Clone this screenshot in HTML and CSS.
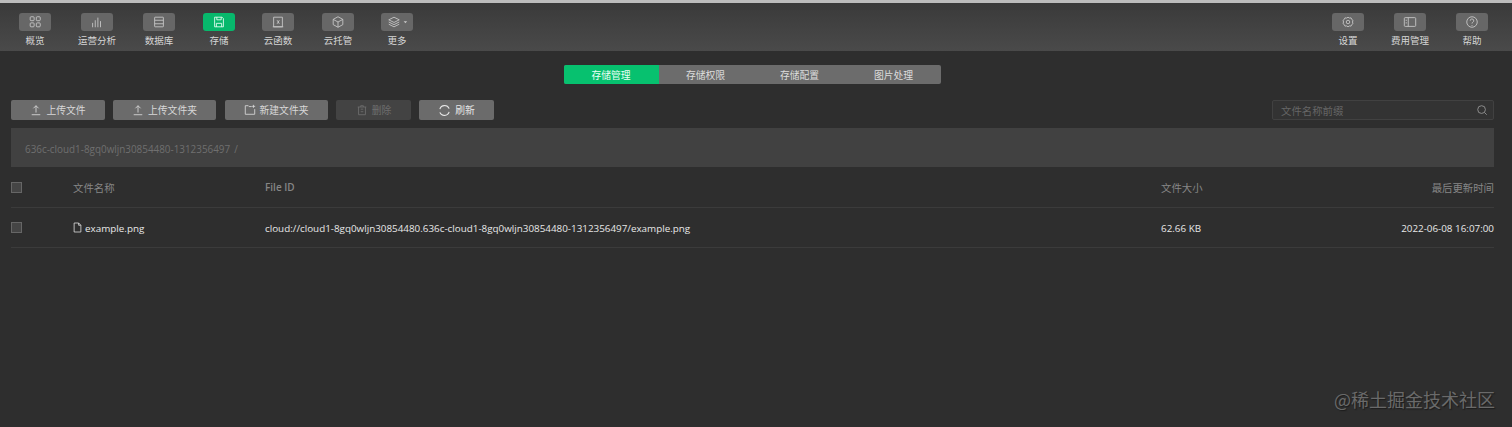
FILE: index.html
```html
<!DOCTYPE html>
<html lang="zh">
<head>
<meta charset="utf-8">
<title>存储</title>
<link rel="stylesheet" href="styles.css">
</head>
<body>
<header class="toolbar">
  <nav class="tool-group">
    <div class="tool w62"><span class="tool-btn"><svg viewBox="0 0 16 16" class="ic"><rect x="2.500" y="2" width="4.500" height="4.500" rx="1"/><rect x="9.500" y="2" width="4.500" height="4.500" rx="1"/><rect x="2.500" y="9" width="4.500" height="4.500" rx="1"/><rect x="9.500" y="9" width="4.500" height="4.500" rx="1"/></svg></span><span class="tool-label">概览</span></div>
    <div class="tool w62"><span class="tool-btn"><svg viewBox="0 0 16 16" class="ic"><path d="M3 9v5M6 6v8M9 3v11M12 7v7"/></svg></span><span class="tool-label">运营分析</span></div>
    <div class="tool w62"><span class="tool-btn"><svg viewBox="0 0 16 16" class="ic"><rect x="3" y="2.500" width="10" height="11" rx=".5"/><path d="M3 6h10M3 10h10"/></svg></span><span class="tool-label">数据库</span></div>
    <div class="tool w58"><span class="tool-btn active"><svg viewBox="0 0 16 16" class="ic"><path d="M3 2.500h8.500l1.500 1.500v9.500H3z"/><path d="M5.500 2.500v3h5v-3M5 13.500V9.500h6v4"/></svg></span><span class="tool-label">存储</span></div>
    <div class="tool w60"><span class="tool-btn"><svg viewBox="0 0 16 16" class="ic"><path d="M3 2.500h10v11H3zM2 13.500h12"/><path d="M7 6l2.500 4M9.500 6L7 10"/></svg></span><span class="tool-label">云函数</span></div>
    <div class="tool w60"><span class="tool-btn"><svg viewBox="0 0 16 16" class="ic"><path d="M8 2l5.500 3v6L8 14l-5.500-3V5zM2.500 5L8 8l5.500-3M8 8v6"/></svg></span><span class="tool-label">云托管</span></div>
    <div class="tool w58"><span class="tool-btn"><svg viewBox="0 0 24 16" class="ic wide"><path d="M8 2.500l6 3-6 3-6-3zM2 8l6 3 6-3M2 10.500l6 3 6-3"/><path class="caret" d="M19 7h4l-2 2.500z"/></svg></span><span class="tool-label">更多</span></div>
  </nav>
  <nav class="tool-group">
    <div class="tool w62"><span class="tool-btn"><svg viewBox="0 0 16 16" class="ic"><circle cx="8" cy="8" r="2"/><path d="M8 2.500l1.500 1 2-.2.800 1.800 1.500 1.200L13 8l.8 1.700-1.500 1.200-.8 1.800-2-.2-1.500 1-1.500-1-2 .2-.8-1.800-1.500-1.200L3 8l-.8-1.700 1.500-1.200.8-1.800 2 .2z"/></svg></span><span class="tool-label">设置</span></div>
    <div class="tool w62"><span class="tool-btn"><svg viewBox="0 0 16 16" class="ic"><rect x="1.500" y="3" width="13" height="10" rx="1"/><path d="M6 3v10M3 6h1.500M3 9h1.500"/></svg></span><span class="tool-label">费用管理</span></div>
    <div class="tool w62"><span class="tool-btn"><svg viewBox="0 0 16 16" class="ic"><circle cx="8" cy="8" r="6"/><path d="M6 6.500a2 2 0 1 1 3 1.700c-.7.400-1 .8-1 1.600M8 11.500v1"/></svg></span><span class="tool-label">帮助</span></div>
  </nav>
</header>

<main class="content">
  <div class="tabs-row">
    <div class="tabs">
      <span class="tab on">存储管理</span>
      <span class="tab">存储权限</span>
      <span class="tab">存储配置</span>
      <span class="tab">图片处理</span>
    </div>
  </div>

  <div class="actions">
    <button class="btn b94"><svg viewBox="0 0 14 14" class="bi"><path d="M7 10V2M4 5l3-3 3 3M2 12.500h10"/></svg>上传文件</button>
    <button class="btn b103"><svg viewBox="0 0 14 14" class="bi"><path d="M7 10V2M4 5l3-3 3 3M2 12.500h10"/></svg>上传文件夹</button>
    <button class="btn b103"><svg viewBox="0 0 14 14" class="bi"><path d="M9 3H6L5 2H1.500v10h11V6M11 1v3.500M9.500 2.700H13"/></svg>新建文件夹</button>
    <button class="btn b75 disabled"><svg viewBox="0 0 14 14" class="bi"><path d="M3 3.500v9h8v-9M2 3.500h10M5.500 3.500V2h3v1.500M5.500 6h3M5.500 9h3"/></svg>删除</button>
    <button class="btn b75 refresh"><svg viewBox="0 0 14 14" class="bi big"><path d="M2 5.500A5.300 5.300 0 0 1 12 5M12 8.500A5.300 5.300 0 0 1 2 9"/></svg>刷新</button>
    <div class="search"><span>文件名称前缀</span><svg viewBox="0 0 14 14" class="si"><circle cx="6.500" cy="6.500" r="4.500"/><path d="M10 10l2.500 2.500"/></svg></div>
  </div>

  <div class="crumb"><span>636c-cloud1-8gq0wljn30854480-1312356497</span><span class="slash">/</span></div>

  <div class="row head">
    <span class="check"></span>
    <span class="c-name">文件名称</span>
    <span class="c-id">File ID</span>
    <span class="c-size">文件大小</span>
    <span class="c-time">最后更新时间</span>
  </div>
  <div class="row">
    <span class="check"></span>
    <span class="c-name"><svg viewBox="0 0 12 14" class="fi"><path d="M1.500 1h6l3 3v9h-9zM7.500 1v3h3"/></svg>example.png</span>
    <span class="c-id">cloud://cloud1-8gq0wljn30854480.636c-cloud1-8gq0wljn30854480-1312356497/example.png</span>
    <span class="c-size">62.66 KB</span>
    <span class="c-time">2022-06-08 16:07:00</span>
  </div>
</main>

<div class="watermark">@稀土掘金技术社区</div>
</body>
</html>
```
FILE: styles.css
```css
* { box-sizing: border-box; }
html, body { margin: 0; height: 427px; overflow: hidden; }
body {
  position: relative;
  background: #2e2e2e;
  color: #e6e6e6;
  font-family: "Open Sans", "Noto Sans CJK SC", sans-serif;
  font-size: 10px;
}
svg { fill: none; stroke: currentColor; stroke-width: 1; }

.toolbar {
  height: 51px;
  border-top: 3px solid #bdbdbd;
  background: linear-gradient(#3a3a3a, #4a4a4a);
  display: flex;
  justify-content: space-between;
  padding: 10px 9px 0 4px;
}
.tool-group { display: flex; }
.tool { display: flex; flex-direction: column; align-items: center; gap: 3px; }
.w62 { width: 62px; }
.w60 { width: 60px; }
.w58 { width: 58px; }
.tool-btn {
  width: 32px; height: 18px;
  border-radius: 3px;
  background: #676767;
  display: flex; align-items: center; justify-content: center;
  color: #c8c8c8;
}
.tool-btn.active { background: #07b86c; color: #e8fff4; }
.ic { width: 14px; height: 14px; }
.ic.wide { width: 21px; }
.caret { fill: currentColor; stroke: none; }
.tool-label { font-size: 9.500px; line-height: 13px; color: #d6d6d6; white-space: nowrap; }

.content { padding: 0 18px 0 11px; }
.tabs-row { display: flex; justify-content: center; padding: 14px 0 0 0; margin-left: -1px; }
.tabs {
  display: flex;
  width: 377px; height: 19px;
  background: #6c6c6c;
  border-radius: 2px;
  overflow: hidden;
}
.tab { flex: 1; display: flex; align-items: center; justify-content: center; font-size: 9.800px; color: #dcdcdc; }
.tab.on { background: #07c16f; color: #eafff5; flex: 0 0 95px; }

.actions { display: flex; align-items: center; margin-top: 16px; height: 20px; }
.btn {
  height: 20px;
  border: 0;
  border-radius: 2px;
  background: #6b6b6b;
  color: #d8d8d8;
  font: inherit;
  font-size: 9.800px;
  display: flex; align-items: center; justify-content: center;
  gap: 4px;
  padding: 0;
  margin-right: 8px;
}
.b94 { width: 94px; }
.b103 { width: 103px; margin-right: 8.500px; }
.b75 { width: 75px; }
.disabled { background: #434343; color: #6e6e6e; }
.refresh { color: #e6e6e6; }
.bi { width: 12px; height: 12px; }
.bi.big { width: 13px; height: 13px; stroke-width: 1.200; }
.search {
  margin-left: auto;
  width: 222px; height: 20px;
  border: 1px solid #414141;
  border-radius: 2px;
  background: #333;
  display: flex; align-items: center; justify-content: space-between;
  padding: 0 5px 0 8px;
  font-size: 10.400px;
  color: #666;
}
.si { width: 12px; height: 12px; color: #999; }

.crumb {
  margin-top: 8px;
  height: 39px;
  background: #414141;
  padding: 2px 0 0 14px;
  display: flex; align-items: center; gap: 4px;
  color: #6f6f6f;
  font-size: 9.900px;
}

.row {
  position: relative;
  height: 40px;
  display: flex; align-items: center;
  border-bottom: 1px solid #3b3b3b;
  font-size: 9.850px;
  color: #e8e8e8;
}
.row.head { height: 41px; font-size: 10.400px; color: #868686; }
.row.head .c-id { font-size: 10px; font-weight: 600; }
.check { width: 11px; height: 11px; border: 1px solid #666; background: #454545; flex: none; }
.c-name { margin-left: 51px; width: 192px; display: flex; align-items: center; gap: 3px; }
.c-id { width: 896px; }
.c-size { width: 160px; }
.c-time { flex: 1; text-align: right; }
.fi { width: 9px; height: 11px; }

.watermark {
  position: absolute;
  right: 17px; bottom: 16px;
  font-size: 18px;
  line-height: 24px;
  font-family: "Noto Sans CJK SC", sans-serif;
  color: #6a6a6a;
  text-shadow: 1px 1px 1px #1c1c1c;
}
```
